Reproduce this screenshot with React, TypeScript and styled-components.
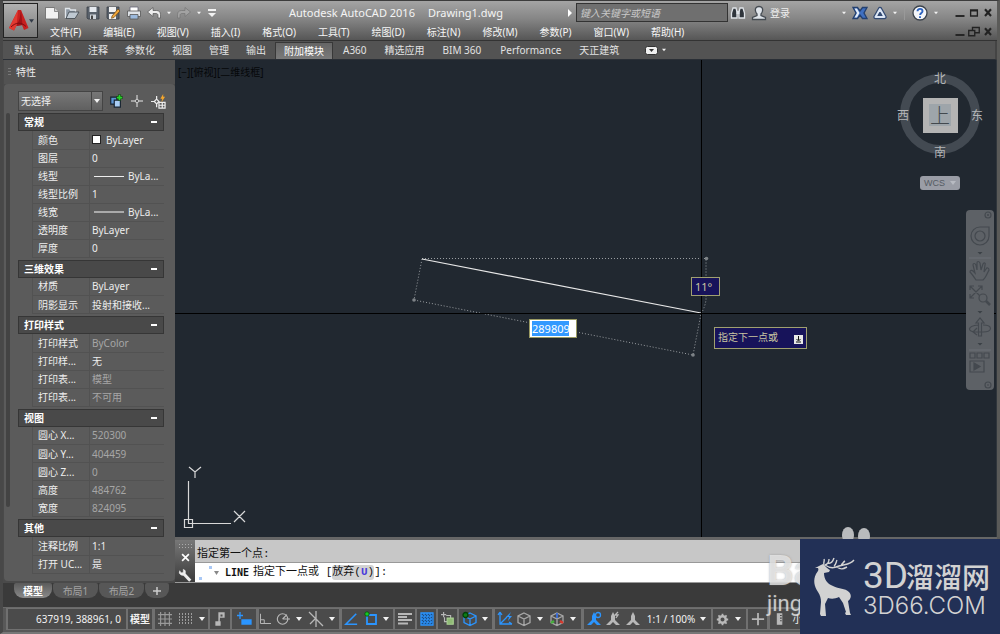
import React from "react";
import styled, { createGlobalStyle, css } from "styled-components";

const Global = createGlobalStyle`
  * { box-sizing: border-box; }
  html, body { margin: 0; padding: 0; }
  body {
    background: #3a3a3a;
    font: 10px/14px "Noto Sans", "Noto Sans CJK SC", sans-serif;
    color: #eee;
  }
  button, input, select { font: inherit; color: inherit; margin: 0; padding: 0; border: 0; background: none; }
  button { cursor: pointer; white-space: nowrap; }
  svg { display: block; flex: none; }
  a { color: inherit; text-decoration: none; }
  ul { list-style: none; margin: 0; padding: 0; }
`;

const Page = styled.div`
  position: relative;
  overflow: hidden;
`;

const Frame = styled.div`
  display: flex;
  flex-direction: column;
  min-height: 100vh;
  overflow: hidden;
  border-top: 1px solid #3c3c3c;
  border-left: 3px solid #484848;
  border-right: 3px solid #5a5a58;
  border-bottom: 2px solid #777;
`;

/* ---------- title bar ---------- */

const Header = styled.header`
  display: flex;
  height: 40px;
  padding-top: 2px;
  background: linear-gradient(#a4a4a4, #868686 45%, #565656);
  border-bottom: 1px solid #333;
`;

const AppButton = styled.button`
  display: flex;
  align-items: center;
  justify-content: center;
  width: 35px;
  height: 35px;
  flex: none;
  background: linear-gradient(#b0b0b0, #7a7a7a);
  border: 1px solid #222;
`;

const HeaderRows = styled.div`
  flex: 1;
  min-width: 0;
`;

const TitleRow = styled.div`
  display: flex;
  align-items: center;
  height: 19px;
`;

const MenuRow = styled.div`
  display: flex;
  justify-content: space-between;
  align-items: center;
  height: 20px;
`;

const QuickAccess = styled.div`
  display: flex;
  align-items: center;
  padding-left: 4px;
`;

const IconButton = styled.button<{ $w?: number }>`
  display: flex;
  align-items: center;
  justify-content: center;
  width: ${(p) => p.$w ?? 20}px;
  height: 18px;
  flex: none;
`;

const Title = styled.h1`
  flex: 1;
  display: flex;
  justify-content: center;
  gap: 13px;
  margin: 0;
  padding-left: 8px;
  font-size: 11px;
  line-height: 16px;
  font-weight: 400;
  color: #f4f4f4;
  white-space: nowrap;
`;

const Search = styled.input`
  width: 152px;
  height: 19px;
  padding: 0 3px;
  background: #6f6f6f;
  border: 1px solid #333;
  font-style: italic;
  &::placeholder { color: #c9c9c9; opacity: 1; }
`;

const SignIn = styled.button`
  display: flex;
  align-items: center;
  gap: 3px;
  width: 90px;
  padding-left: 3px;
`;

const Separator = styled.span`
  width: 1px;
  height: 14px;
  margin: 0 4px;
  background: #999;
`;

const WindowButtons = styled.div`
  display: flex;
  padding-right: 2px;
`;

const TitleWindowButtons = styled(WindowButtons)`
  padding-left: 12px;
`;

const MenuList = styled.ul`
  display: flex;
  gap: 22px;
  padding-left: 12px;
`;

const MenuItem = styled.button`
  height: 18px;
  color: #f6f6f6;
`;

/* ---------- ribbon ---------- */

const Ribbon = styled.nav`
  display: flex;
  align-items: center;
  height: 19px;
  padding-left: 3px;
  background: #535353;
  border-right: 2px solid #444;
  border-bottom: 1px solid #2a2f36;
`;

const RibbonTab = styled.button<{ $active?: boolean; $wide?: boolean }>`
  height: 17px;
  padding: 0 ${(p) => (p.$wide ? 9 : 8)}px;
  margin-right: 1px;
  color: #e2e2e2;
  ${(p) =>
    p.$active &&
    css`
      color: #fff;
      background: linear-gradient(#656565, #7a7a7a);
      border: 1px solid #383838;
      border-bottom: 0;
    `}
`;

const RibbonToggle = styled.button`
  display: flex;
  align-items: center;
  gap: 4px;
  margin-left: 17px;
`;

/* ---------- workspace ---------- */

const Workspace = styled.div`
  display: flex;
  flex: 1;
  background: #3a3a3a;
`;

const Palette = styled.aside`
  display: flex;
  flex-direction: column;
  width: 172px;
  flex: none;
  padding: 0 0 2px 1px;
  background: #4a4a4a;
`;

const PaletteTitle = styled.h2`
  display: flex;
  align-items: center;
  gap: 5px;
  margin: 0;
  height: 24px;
  padding-left: 4px;
  font-size: 10px;
  font-weight: 400;
  background: #525252;
`;

const Grip = styled.span`
  width: 3px;
  height: 9px;
  background: repeating-linear-gradient(#777 0 1px, transparent 1px 3px);
`;

const PaletteBody = styled.div`
  flex: 1;
  padding: 7px 11px 4px 3px;
  background: #5b5b5b;
  border-radius: 4px;
`;

const SelectionRow = styled.div`
  display: flex;
  align-items: center;
  height: 20px;
  padding-left: 11px;
  margin-bottom: 2px;
`;

const SelectBox = styled.div`
  position: relative;
  display: flex;
  flex: none;
  width: 85px;
  height: 20px;
  margin-right: 3px;
  background: linear-gradient(#777, #606060);
  border: 1px solid #444;
  select {
    width: 100%;
    padding-left: 2px;
    appearance: none;
  }
`;

const SelectArrow = styled.span`
  position: absolute;
  right: 0;
  top: 0;
  bottom: 0;
  display: flex;
  align-items: center;
  width: 11px;
  padding-left: 2px;
  border-left: 1px solid #444;
  pointer-events: none;
`;

const PropertyArea = styled.div`
  display: flex;
  gap: 8px;
`;

const ScrollThumb = styled.div`
  width: 4px;
  height: 394px;
  margin-left: -1px;
  background: #434343;
  border-radius: 2px;
`;

const Sections = styled.div`
  flex: 1;
  min-width: 0;
`;

const SectionHeader = styled.button`
  display: flex;
  align-items: center;
  justify-content: space-between;
  width: 100%;
  height: 18px;
  padding: 0 6px 0 5px;
  font-weight: 700;
  color: #fff;
  background: #494949;
  border: 1px solid #363636;
`;

const PropertyTable = styled.table`
  width: calc(100% - 14px);
  margin: 0 0 2px 14px;
  table-layout: fixed;
  border-collapse: collapse;
  tr { height: 18px; }
  th, td {
    height: 18px;
    padding: 0 0 0 5px;
    font-weight: 400;
    text-align: left;
    border-left: 1px solid #525252;
    border-bottom: 1px solid #525252;
    line-height: 14px;
    overflow: hidden;
    white-space: nowrap;
  }
  th { width: 57px; }
  td { padding-left: 2px; }
`;

const Value = styled.span<{ $muted?: boolean }>`
  display: flex;
  align-items: center;
  color: ${(p) => (p.$muted ? "#a6a6a6" : "#ededed")};
`;

const Swatch = styled.i`
  width: 9px;
  height: 9px;
  margin-right: 5px;
  background: #fff;
  border: 1px solid #222;
`;

const LineSample = styled.i<{ $bold?: boolean }>`
  width: 30px;
  margin: 0 4px 0 2px;
  border-top: ${(p) => (p.$bold ? "2px solid #aaa" : "1px solid #eee")};
`;

/* ---------- drawing area ---------- */

const DrawingColumn = styled.main`
  display: flex;
  flex-direction: column;
  flex: 1;
  min-width: 0;
`;

const Canvas = styled.section`
  position: relative;
  flex: 1;
  min-height: 476px;
  background: #212830;
  border-right: 1px solid #30363c;
  overflow: hidden;
`;

const Drawing = styled.svg`
  position: absolute;
  inset: 0;
  width: 100%;
  height: 100%;
`;

const ViewLabel = styled.button`
  position: absolute;
  left: 3px;
  top: 5px;
  color: #050709;
`;

const Floating = styled.div<{ $x: number; $y: number }>`
  position: absolute;
  left: ${(p) => p.$x}px;
  top: ${(p) => p.$y}px;
`;

const LengthInput = styled.input`
  display: block;
  width: 48px;
  height: 19px;
  padding: 0 2px;
  font-size: 11px;
  color: #fff;
  background: linear-gradient(#3399ff, #3399ff) 2px 1px / 37px 15px no-repeat #fff;
  border: 1px solid #9a9a62;
`;

const AngleInput = styled.input`
  display: block;
  width: 29px;
  height: 19px;
  padding: 0 3px;
  font-size: 11px;
  color: #c9c6a2;
  background: #17135a;
  border: 1px solid #a0a070;
`;

const Prompt = styled.div`
  display: flex;
  align-items: center;
  justify-content: space-between;
  width: 93px;
  height: 22px;
  padding: 0 3px 2px 3px;
  color: #c9c6a2;
  background: #17135a;
  border: 1px solid #a0a070;
`;

const PromptKey = styled.button`
  display: grid;
  place-items: center;
  width: 9px;
  height: 9px;
  margin-top: 5px;
  background: #e8e8e8;
`;

const ViewCube = styled.div`
  position: absolute;
  right: 11px;
  top: 8px;
  width: 90px;
  display: flex;
  flex-direction: column;
  align-items: center;
`;

const WcsButton = styled.button`
  display: flex;
  align-items: center;
  justify-content: space-between;
  width: 40px;
  height: 14px;
  margin-top: 14px;
  padding: 0 4px;
  font: 9px/12px "Liberation Sans", sans-serif;
  color: #555b63;
  background: #9a9da6;
  border-radius: 3px;
`;

const CompassGrid = styled.div`
  position: relative;
  display: grid;
  grid-template-columns: 16px 58px 16px;
  grid-template-rows: 20px 54px 20px;
  place-items: center;
  font: 12px/16px "Noto Sans CJK SC", sans-serif;
  color: #b4b6b8;
`;

const Ring = styled.div`
  position: absolute;
  left: 5px;
  top: 6px;
  width: 80px;
  height: 80px;
  border: 9px solid #434a52;
  border-radius: 50%;
`;

const Compass = styled.span<{ $col: number; $row: number }>`
  position: relative;
  grid-column: ${(p) => p.$col};
  grid-row: ${(p) => p.$row};
`;

const CubeFace = styled.button`
  position: relative;
  grid-column: 2;
  grid-row: 2;
  width: 35px;
  height: 35px;
  font: 300 20px/22px "Noto Sans CJK SC", sans-serif;
  color: #43494e;
  background: linear-gradient(#9ea5aa, #9ea5aa) center / 22px 22px no-repeat #b4b4b4;
`;

const NavBar = styled.div`
  position: absolute;
  right: 2px;
  top: 150px;
  display: flex;
  flex-direction: column;
  align-items: center;
  width: 28px;
  height: 180px;
  background: #5d6166;
  border-radius: 4px;
`;

/* ---------- command line ---------- */

const CommandLine = styled.section`
  display: flex;
  height: 46px;
  border-top: 3px solid #666;
  border-bottom: 1px solid #999;
  font: 11px/15px "Liberation Mono", "Noto Sans CJK SC", monospace;
`;

const CommandTools = styled.div`
  display: flex;
  flex-direction: column;
  align-items: center;
  width: 20px;
  background: linear-gradient(#777, #3c3c3c);
`;

const Dots = styled.span`
  width: 15px;
  height: 5px;
  margin-top: 3px;
  flex: none;
  background: radial-gradient(circle, #aaa 1px, transparent 1px) 0 0 / 3px 3px;
`;

const CommandText = styled.div`
  flex: 1;
  min-width: 0;
  color: #111;
`;

const History = styled.div`
  height: 22px;
  padding: 7px 2px 0;
  background: #c7c7c7;
`;

const CommandRow = styled.label`
  display: flex;
  align-items: center;
  height: 20px;
  padding-left: 4px;
  background: #fff;
  border-top: 1px solid #999;
  white-space: pre;
  b { margin: 0 4px; font: 700 10px/15px "DejaVu Sans Mono", monospace; }
  input { flex: 1; min-width: 0; }
`;

const OptionButton = styled.button`
  height: 15px;
  line-height: 15px;
  background: #d2d2d2;
  border-radius: 3px;
  em { font-style: normal; font-weight: 700; color: #4a3ddb; }
`;

/* ---------- bottom bars ---------- */

const LayoutTabs = styled.nav`
  display: flex;
  align-items: flex-start;
  height: 24px;
  padding-left: 11px;
  background: #3a3a3a;
`;

const LayoutTab = styled.button<{ $active?: boolean; $w?: number }>`
  width: ${(p) => p.$w ?? 45}px;
  height: 15px;
  margin-right: 1px;
  line-height: 14px;
  color: ${(p) => (p.$active ? "#fff" : "#a2a2a2")};
  font-weight: ${(p) => (p.$active ? 700 : 400)};
  background: ${(p) => (p.$active ? "linear-gradient(#5b5b5b, #8a8a8a)" : "#575757")};
  border-radius: 2px 2px 9px 9px;
`;

const StatusBar = styled.footer`
  display: flex;
  height: 25px;
  padding: 0 0 2px 3px;
  background: #585858;
  border-top: 1px solid #6a6a6a;
`;

const StatusGroup = styled.div<{ $w: number }>`
  display: flex;
  align-items: center;
  width: ${(p) => p.$w}px;
  flex: none;
  overflow: hidden;
  background: #4b4b4b;
  border: 1px solid #707070;
  border-left-width: ${(p) => (p.$w > 50 ? 2 : 1)}px;
`;

const StatusButton = styled.button<{ $w?: number; $bold?: boolean }>`
  display: flex;
  align-items: center;
  justify-content: center;
  width: ${(p) => (p.$w ? `${p.$w}px` : "auto")};
  flex: ${(p) => (p.$w ? "none" : "1")};
  height: 20px;
  font-weight: ${(p) => (p.$bold ? 700 : 400)};
  color: #f2f2f2;
`;

const Coordinates = styled(StatusButton)`
  justify-content: flex-end;
  padding-right: 5px;
`;

/* ---------- overlays ---------- */

const Brand = styled.div`
  position: absolute;
  right: 0;
  bottom: 0;
  display: flex;
  width: 200px;
  height: 95px;
  padding: 18px 0 0 12px;
  background: #223056;
  color: #d2d2d2;
`;

const BrandText = styled.div`
  margin-left: 6px;
  white-space: nowrap;
`;

const BrandName = styled.div`
  display: flex;
  align-items: center;
  height: 36px;
  margin-top: 1px;
  font: 500 28px/36px "Noto Sans CJK SC", sans-serif;
  span { font: 400 37px/36px Roboto, sans-serif; margin-right: -2px; }
`;

const BrandSite = styled.div`
  font: 300 24px/24px Inter, sans-serif;
`;

const Watermark = styled.div`
  position: absolute;
  right: 0;
  bottom: 17px;
  width: 233px;
  color: rgba(240, 240, 240, 0.75);
  text-shadow: 0 0 2px rgba(120, 120, 120, 0.6);
  pointer-events: none;
  strong { display: block; font: 700 42px/40px Roboto, sans-serif; }
  span { display: block; font: 400 22px/26px Roboto, sans-serif; }
`;

const Paws = styled.svg`
  position: absolute;
  right: 129px;
  bottom: 95px;
`;

/* ---------- icons ---------- */

type IconProps = { children: React.ReactNode; size?: number; color?: string };
const Icon = ({ children, size = 16, color = "#b8b8b8" }: IconProps) => (
  <svg width={size} height={size} viewBox="0 0 16 16" fill="none" stroke={color} strokeWidth="1.3">
    {children}
  </svg>
);

const Caret = ({ color = "#f2f2f2", w = 6 }: { color?: string; w?: number }) => (
  <svg width={w} height="4" viewBox="0 0 6 4">
    <path d="M0 0h6L3 4z" fill={color} />
  </svg>
);

const blue = "#2b95ff";

const NewIcon = () => (
  <Icon>
    <path d="M1.500 2.500h9l4 4V14h-13z" fill="#f1f1f1" stroke="#666" strokeWidth=".8" />
    <path d="M10.500 2.500v4h4" stroke="#777" fill="#ccc" strokeWidth=".8" />
  </Icon>
);
const OpenIcon = () => (
  <Icon>
    <path d="M1.500 13V3.500h4l1 1.500h5v2" fill="#8e99a5" stroke="#e0e5ea" />
    <path d="M2 13.500 5 7h10l-4 6.500z" fill="#bfc9d2" stroke="#3b4249" strokeWidth=".8" />
  </Icon>
);
const SaveIcon = () => (
  <Icon>
    <path d="M2 2h12v12H3l-1-1z" fill="#59616b" stroke="#3b4047" strokeWidth=".8" />
    <path d="M4.500 2h7v5h-7z" fill="#e5e9ee" stroke="none" />
    <path d="M5 9.500h6V14H5z" fill="#cfd4da" stroke="none" />
    <path d="M6 10.500h2V14H6z" fill="#444" stroke="none" />
  </Icon>
);
const SaveAsIcon = () => (
  <Icon>
    <path d="M2 2h12v12H3l-1-1z" fill="#59616b" stroke="#3b4047" strokeWidth=".8" />
    <path d="M4 2h7v5H4zM4 9h7v5H4z" fill="#f1f1f1" stroke="none" />
    <path d="m7 11 6-7 2 2-6 6.500-2.500.800z" fill="#f0a63a" stroke="#6b4615" strokeWidth=".7" />
  </Icon>
);
const PrintIcon = () => (
  <Icon>
    <path d="M4 6V2h8v4" fill="#fff" stroke="#667" strokeWidth=".8" />
    <path d="M1.500 6h13v5.500h-13z" fill="#dfe3e8" stroke="#555" strokeWidth=".8" />
    <path d="M4 9.500h8V14H4z" fill="#9bb9dd" stroke="#555" strokeWidth=".8" />
  </Icon>
);
const UndoIcon = ({ muted }: { muted?: boolean }) => (
  <Icon color={muted ? "#747474" : "#555"}>
    <path
      transform={muted ? "matrix(-1 0 0 1 16 0)" : undefined}
      d="M1.500 7 7 2.500v3h3.500c2.500 0 4 1.500 4 4V13h-2.500v-2.500c0-1.300-.7-2-2-2H7v3z"
      fill={muted ? "#a2a2a2" : "#ededed"}
      strokeWidth=".7"
    />
  </Icon>
);

const LogoA = () => (
  <svg width="21" height="23" viewBox="0 0 21 23">
    <path d="M10 1 1 19l5 2.500 2-4.500 6-1 2 5 4.500-2L13 1z" fill="#c8201f" />
    <path d="M10 1 8.500 17 6 21.500 1 19z" fill="#e23a31" />
    <path d="m13 1 1.500 15-6 1 3-7z" fill="#a01216" />
    <path d="M3 18c5-5 10-5 15-.500" fill="none" stroke="#7c0c10" strokeWidth="1" />
  </svg>
);

const Deer = () => (
  <svg width="45" height="60" viewBox="0 0 45 60" fill="#d2d2d2">
    <path d="M3 11c3-1 5-3 8-4 2 1 3 4 7 6l-1 2-5 1c0 6 3 11 9 13 6 3 12 2 16 6 3 3 2 7-1 9l2 12 1 2h-5l-1-2 1-1-3-9-4-6c-4 2-8 2-11 1l-3 6 1 12h-5l-1-2 1-12c0-4-1-7-3-10-4-6-5-12-2-18 2-3 3-4 2-6z" />
    <path
      d="M12 8C11 5 13 4 12 2M13 8c3-1 4-3 4-6M16 6c3 1 5-2 6-5M13 8c6 4 9 3 14 1 6-2 11-1 15-6M22 9c2-1 2-4 3-6M29 8c2-1 2-3 4-4M25 10c4 3 6 2 10 0"
      fill="none"
      stroke="#d2d2d2"
      strokeWidth="1.400"
    />
  </svg>
);

/* ---------- data ---------- */

const menus = ["文件(F)", "编辑(E)", "视图(V)", "插入(I)", "格式(O)", "工具(T)", "绘图(D)", "标注(N)", "修改(M)", "参数(P)", "窗口(W)", "帮助(H)"];
const ribbonTabs = ["默认", "插入", "注释", "参数化", "视图", "管理", "输出", "附加模块", "A360", "精选应用", "BIM 360", "Performance", "天正建筑"];

type Row = { label: string; value: string; muted?: boolean; kind?: "swatch" | "line" | "bold" };
const sections: { title: string; rows: Row[] }[] = [
  {
    title: "常规",
    rows: [
      { label: "颜色", value: "ByLayer", kind: "swatch" },
      { label: "图层", value: "0" },
      { label: "线型", value: "ByLa...", kind: "line" },
      { label: "线型比例", value: "1" },
      { label: "线宽", value: "ByLa...", kind: "bold" },
      { label: "透明度", value: "ByLayer" },
      { label: "厚度", value: "0" },
    ],
  },
  {
    title: "三维效果",
    rows: [
      { label: "材质", value: "ByLayer" },
      { label: "阴影显示", value: "投射和接收..." },
    ],
  },
  {
    title: "打印样式",
    rows: [
      { label: "打印样式", value: "ByColor", muted: true },
      { label: "打印样...", value: "无" },
      { label: "打印表...", value: "模型", muted: true },
      { label: "打印表...", value: "不可用", muted: true },
    ],
  },
  {
    title: "视图",
    rows: [
      { label: "圆心 X...", value: "520300", muted: true },
      { label: "圆心 Y...", value: "404459", muted: true },
      { label: "圆心 Z...", value: "0", muted: true },
      { label: "高度", value: "484762", muted: true },
      { label: "宽度", value: "824095", muted: true },
    ],
  },
  {
    title: "其他",
    rows: [
      { label: "注释比例", value: "1:1" },
      { label: "打开 UC...", value: "是" },
    ],
  },
];

/* ---------- page parts ---------- */

const TitleBar = () => (
  <Header>
    <AppButton aria-label="应用程序菜单">
      <LogoA />
      <Caret color="#333b48" w={5} />
    </AppButton>
    <HeaderRows>
      <TitleRow>
        <QuickAccess>
          <IconButton aria-label="新建"><NewIcon /></IconButton>
          <IconButton aria-label="打开"><OpenIcon /></IconButton>
          <IconButton $w={21} aria-label="保存"><SaveIcon /></IconButton>
          <IconButton aria-label="另存为"><SaveAsIcon /></IconButton>
          <IconButton $w={21} aria-label="打印"><PrintIcon /></IconButton>
          <IconButton aria-label="放弃"><UndoIcon /></IconButton>
          <IconButton $w={10} aria-label="放弃列表"><Caret w={4} /></IconButton>
          <IconButton aria-label="重做"><UndoIcon muted /></IconButton>
          <IconButton $w={10} aria-label="重做列表"><Caret w={4} /></IconButton>
          <IconButton $w={16} aria-label="自定义">
            <svg width="8" height="8" viewBox="0 0 8 8"><path d="M0 0h8v2H0zM0 4h8L4 8z" fill="#f2f2f2" /></svg>
          </IconButton>
        </QuickAccess>
        <Title><span>Autodesk AutoCAD 2016</span><span>Drawing1.dwg</span></Title>
        <IconButton $w={12} aria-label="展开搜索">
          <svg width="4" height="8" viewBox="0 0 4 8"><path d="M0 0v8l4-4z" fill="#fff" /></svg>
        </IconButton>
        <Search aria-label="搜索" placeholder="键入关键字或短语" />
        <IconButton aria-label="查找">
          <Icon>
            <path d="M3 3h3l1 4v6H1.500V8zM13 3h-3L9 7v6h5.500V8z" fill="#2f353c" stroke="#dfe3e8" />
            <path d="M6.500 6h3v3h-3z" fill="#dfe3e8" stroke="none" />
          </Icon>
        </IconButton>
        <SignIn>
          <Icon>
            <path d="M8 1.500c3 0 4 2 3.500 4.500-.3 1.700-1 2.500-1.500 3v1.500l4.500 2v2h-13v-2l4.500-2V9c-.5-.5-1.200-1.300-1.500-3C4 3.500 5 1.500 8 1.500z" fill="#dfe4ea" stroke="#454b52" />
          </Icon>
          登录
        </SignIn>
        <IconButton $w={12} aria-label="登录菜单"><Caret w={4} /></IconButton>
        <IconButton aria-label="Exchange">
          <Icon>
            <path d="M1 2.500h4.500L8 6l2.500-3.500H15L12 8l3 5.500h-4.500L8 10l-2.500 3.500H1L4 8z" fill="#3f6fc0" stroke="#24406f" />
            <path d="M2.500 3.500H5L7.500 8 5 12.500H2.500L5 8z" fill="#e3ecf8" stroke="none" />
          </Icon>
        </IconButton>
        <IconButton aria-label="Autodesk 360">
          <Icon>
            <path d="M8 4 12.500 12h-9z" stroke="#334a72" strokeWidth="4.500" strokeLinejoin="round" />
            <path d="M8 4 12.500 12h-9z" stroke="#dce6f5" strokeWidth="2" strokeLinejoin="round" />
            <circle cx="8" cy="9.500" r="1.500" fill="#334a72" stroke="none" />
          </Icon>
        </IconButton>
        <IconButton $w={10} aria-label="应用菜单"><Caret w={4} /></IconButton>
        <Separator />
        <IconButton $w={22} aria-label="帮助">
          <Icon>
            <circle cx="8" cy="8" r="7" fill="#f4f6fa" stroke="#3c434c" />
            <path d="M5.500 6.200c0-3.200 5-3 5 0 0 1.800-2.400 1.800-2.400 3.800M8 11.300v1.700" stroke="#2d63c0" strokeWidth="1.900" />
          </Icon>
        </IconButton>
        <IconButton $w={10} aria-label="帮助菜单"><Caret w={4} /></IconButton>
        <TitleWindowButtons>
          <IconButton $w={14} aria-label="最小化"><Icon size={12} color="#222"><path d="M2 12h12" strokeWidth="2.500" /></Icon></IconButton>
          <IconButton $w={14} aria-label="最大化"><Icon size={12} color="#222"><path d="M3.500 4h9v8h-9zM3 5h10" strokeWidth="1.800" /></Icon></IconButton>
          <IconButton $w={14} aria-label="关闭"><Icon size={12} color="#222"><path d="m4 3 8 9M12 3l-8 9" strokeWidth="2.800" /></Icon></IconButton>
        </TitleWindowButtons>
      </TitleRow>
      <MenuRow>
        <MenuList>
          {menus.map((m) => <li key={m}><MenuItem>{m}</MenuItem></li>)}
        </MenuList>
        <WindowButtons>
          <IconButton $w={14} aria-label="最小化图形"><Icon size={12} color="#222"><path d="M2 12h12" strokeWidth="2.500" /></Icon></IconButton>
          <IconButton $w={14} aria-label="还原图形"><Icon size={12} color="#222"><path d="M1 6h8v7H1zM6 6V2h9v7H9" strokeWidth="1.800" /></Icon></IconButton>
          <IconButton $w={14} aria-label="关闭图形"><Icon size={12} color="#222"><path d="m4 3 8 9M12 3l-8 9" strokeWidth="2.800" /></Icon></IconButton>
        </WindowButtons>
      </MenuRow>
    </HeaderRows>
  </Header>
);

const PropertiesPalette = () => (
  <Palette>
    <PaletteTitle><Grip />特性</PaletteTitle>
    <PaletteBody>
      <SelectionRow>
        <SelectBox>
          <select aria-label="选择对象"><option>无选择</option></select>
          <SelectArrow><Caret /></SelectArrow>
        </SelectBox>
        <IconButton aria-label="切换 PICKADD">
          <Icon size={14}>
            <path d="M2 3.500h7v8H2z" fill="#5b93cf" stroke="#16222f" />
            <path d="M6 7h7v8H6z" fill="#a9cdf4" stroke="#16222f" />
            <path d="M12 .500v7M8.500 4h7" stroke="#123d12" strokeWidth="3.500" />
            <path d="M12 1v6M9 4h6" stroke="#29d32a" strokeWidth="2" />
          </Icon>
        </IconButton>
        <IconButton $w={22} aria-label="选择对象">
          <Icon size={12} color="#eee"><path d="M8 0v5M8 11v5M0 8h5M11 8h5M8 5l3 3-3 3-3-3z" /></Icon>
        </IconButton>
        <IconButton aria-label="快速选择">
          <Icon size={15} color="#eee">
            <path d="M6 2v4M6 10v4M0 8h4M6 5.500 8.500 8 6 10.500 3.500 8z" />
            <path d="M8.500 9h6.500v6H8.500zM12 9v6M8.500 12H15" />
            <path d="m13 0-3 5h2l-1 4 4-6h-2z" fill="#f5a72c" stroke="none" />
          </Icon>
        </IconButton>
      </SelectionRow>
      <PropertyArea>
        <ScrollThumb />
        <Sections>
          {sections.map((s) => (
            <React.Fragment key={s.title}>
              <SectionHeader>
                {s.title}
                <svg width="6" height="2"><path d="M0 1h6" stroke="#fff" strokeWidth="2" /></svg>
              </SectionHeader>
              <PropertyTable>
                <tbody>
                  {s.rows.map((r, i) => (
                    <tr key={i}>
                      <th scope="row">{r.label}</th>
                      <td>
                        <Value $muted={r.muted}>
                          {r.kind === "swatch" && <Swatch />}
                          {r.kind === "line" && <LineSample />}
                          {r.kind === "bold" && <LineSample $bold />}
                          {r.value}
                        </Value>
                      </td>
                    </tr>
                  ))}
                </tbody>
              </PropertyTable>
            </React.Fragment>
          ))}
        </Sections>
      </PropertyArea>
    </PaletteBody>
  </Palette>
);

const NavigationBar = () => (
  <NavBar>
    <svg width="28" height="180" viewBox="0 0 28 180" fill="none" stroke="#44494f" strokeWidth="1.200">
      <circle cx="22" cy="5" r="3" />
      <path d="m21 4 2 2m0-2-2 2" strokeWidth=".8" />
      <path d="M14 17h9v9a9 9 0 1 1-9-9z" />
      <circle cx="14" cy="26" r="5" />
      <path d="M11.500 42h5L14 44.500z" fill="#3b4046" stroke="none" />
      <path d="M3 48h22M3 140h22" stroke="#6d7176" strokeWidth="1" />
      <path d="M10 70c-2-3-4-6-6-8 0-2 2-2 3-1l2 2-2-8c0-2 2-2 3 0l1 5v-7c0-2 2-2 3 0l1 7 2-6c1-2 3-1 2 1l-1 7 2-3c1-2 3-1 3 1l-3 6c-1 2-2 3-3 4z" />
      <path d="M4 76 16 88M16 76 4 88M4 80v-4h4M12 76h4v4M4 84v4h4" />
      <circle cx="17" cy="88" r="4" fill="#5d6166" />
      <path d="m20 91 4 4" strokeWidth="2.500" />
      <path d="M11.500 101h5l-2.500 2.500z" fill="#3b4046" stroke="none" />
      <path d="M12.500 126v-13H10l4-5 4 5h-2.500v13zM12 115c-11 1-11 7-2 7h7c10 0 10-7 0-7M11 118l-4 4 4 3" />
      <path d="M11.500 133h5l-2.500 2.500z" fill="#3b4046" stroke="none" />
      <path d="M4 143h5v5H4zM11 143h5v5h-5zM18 143h5v5h-5zM4 151h14v11H4z" />
      <path d="m8 153 6 3.500-6 3.500z" fill="#44494f" />
      <circle cx="22" cy="175" r="3" />
      <path d="M21 175h2" />
    </svg>
  </NavBar>
);

const DrawingArea = () => (
  <Canvas>
    <Drawing>
      <g stroke="#9a9ea2" strokeDasharray="1 2" fill="none">
        <path d="M247 198.500H531V240Q530 247 526 254" />
        <path d="M247 199 239 240 518 295 526 254" />
      </g>
      <path d="M247 199 526 253" stroke="#e8e8e8" strokeWidth="1.200" />
      <g fill="#7d8286">
        <circle cx="531.500" cy="198.500" r="1.800" />
        <circle cx="239" cy="240" r="1.800" />
        <circle cx="518" cy="295" r="1.800" />
      </g>
      <path d="M526.500 0V2000M0 253.500H4000" stroke="#000" />
      <g stroke="#d8d8d8" fill="none" strokeWidth="1.200">
        <path d="M13.500 421V463.500H56M9.500 459.500h8v8h-8zM14 407l6 5 6-5M20 412v6M59 451l11 11M70 451 59 462" />
      </g>
    </Drawing>
    <ViewLabel>[−][俯视][二维线框]</ViewLabel>
    <Floating $x={516} $y={217}><AngleInput aria-label="角度" defaultValue="11°" /></Floating>
    <Floating $x={354} $y={259}><LengthInput aria-label="长度" defaultValue="289809" /></Floating>
    <Floating $x={539} $y={267}>
      <Prompt>
        指定下一点或
        <PromptKey aria-label="选项">
          <svg width="7" height="7" viewBox="0 0 7 7"><path d="M1 6h5M3.500 0v4M1.500 3l2 2 2-2" stroke="#111" fill="none" /></svg>
        </PromptKey>
      </Prompt>
    </Floating>
    <ViewCube>
      <CompassGrid>
        <Ring />
        <Compass $col={2} $row={1}>北</Compass>
        <Compass $col={1} $row={2}>西</Compass>
        <CubeFace>上</CubeFace>
        <Compass $col={3} $row={2}>东</Compass>
        <Compass $col={2} $row={3}>南</Compass>
      </CompassGrid>
      <WcsButton>WCS <Caret color="#b8bbc2" /></WcsButton>
    </ViewCube>
    <NavigationBar />
  </Canvas>
);

const Command = () => (
  <CommandLine>
    <CommandTools>
      <Dots />
      <IconButton $w={20} aria-label="关闭命令行">
        <Icon size={9} color="#fff"><path d="m2 2 12 12M14 2 2 14" strokeWidth="3" /></Icon>
      </IconButton>
      <IconButton $w={20} aria-label="自定义命令行">
        <Icon size={14} color="#eee">
          <path d="m6 6 8 8.500" strokeWidth="3.500" />
          <path d="M2 3a3.500 3.500 0 1 0 4-1.500V5L3.500 5.500z" fill="#eee" strokeWidth=".5" />
        </Icon>
      </IconButton>
    </CommandTools>
    <CommandText>
      <History>指定第一个点:</History>
      <CommandRow>
        <svg width="22" height="16" viewBox="0 0 22 16">
          <path d="M10 1h3v3h-3zM0 12h3v3H0z" fill="#a9c8f5" />
          <path d="M15 6h5l-2.500 4z" fill="#888" />
        </svg>
        <b>LINE</b>指定下一点或 [
        <OptionButton>放弃(<em>U</em>)</OptionButton>]:
        <input aria-label="命令" />
      </CommandRow>
    </CommandText>
  </CommandLine>
);

const Person = ({ color = "#b8b8b8", extra }: { color?: string; extra?: React.ReactNode }) => (
  <Icon color={color}>
    <path d="M8 1 6 5v4l-5 5h4l3-3 3 3h4l-5-5V5z" fill={color} stroke="none" />
    {extra}
  </Icon>
);

const Cube = ({ color = "#a8a8a8", children }: { color?: string; children?: React.ReactNode }) => (
  <Icon color={color}>
    <path d="M8 2 14 5v6.500L8 14.500 2 11.500V5zM2 5l6 3 6-3M8 8v6.500" />
    {children}
  </Icon>
);

const Status = () => (
  <StatusBar>
    <StatusGroup $w={121}><Coordinates>637919, 388961, 0</Coordinates></StatusGroup>
    <StatusGroup $w={26}><StatusButton $bold>模型</StatusButton></StatusGroup>
    <StatusGroup $w={56}>
      <StatusButton $w={20} aria-label="栅格"><Icon size={14} color="#9a9a9a"><path d="M3 0v16M8 0v16M13 0v16M0 3h16M0 8h16M0 13h16" /></Icon></StatusButton>
      <StatusButton $w={20} aria-label="捕捉"><Icon><path d="M2 3h13M2 6h13M2 9h13M2 12h13" strokeDasharray="1 2" /></Icon></StatusButton>
      <StatusButton $w={14} aria-label="捕捉菜单"><Caret /></StatusButton>
    </StatusGroup>
    <StatusGroup $w={22}><StatusButton aria-label="推断约束"><Icon><path d="M7 13V2h5v4H8M4 11h4v3H4z" fill="#b8b8b8" /><path d="M8.500 3.500h2v2h-2z" fill="#4b4b4b" stroke="none" /></Icon></StatusButton></StatusGroup>
    <StatusGroup $w={26}><StatusButton aria-label="动态输入"><Icon color={blue}><path d="M4 1v7M1 4.500h6" /><path d="M6 9h9v4H6z" fill={blue} /></Icon></StatusButton></StatusGroup>
    <StatusGroup $w={83}>
      <StatusButton $w={12} aria-label="正交"><Icon size={12}><path d="M2 1v13h14M2 9h5v5" /></Icon></StatusButton>
      <StatusButton $w={24} aria-label="极轴"><Icon size={14}><circle cx="7.500" cy="8" r="6" /><path d="M7.500 8H16M7.500 8l5-5" /></Icon></StatusButton>
      <StatusButton $w={8} aria-label="极轴菜单"><Caret /></StatusButton>
      <StatusButton $w={26} aria-label="等轴测草图"><Icon><path d="m1 1 14 14M8 0v16M2 13l5-5" /></Icon></StatusButton>
      <StatusButton $w={6} aria-label="等轴测菜单"><Caret /></StatusButton>
    </StatusGroup>
    <StatusGroup $w={54}>
      <StatusButton $w={17} aria-label="对象捕捉追踪"><Icon color={blue} size={14}><path d="M14 2 2 14h13" strokeWidth="1.800" /></Icon></StatusButton>
      <StatusButton $w={24} aria-label="对象捕捉"><Icon color={blue}><path d="M4 4h9v9H4z" strokeWidth="1.800" /><circle cx="4" cy="3" r="2.200" fill="#18c821" stroke="#064d0a" strokeWidth=".8" /></Icon></StatusButton>
      <StatusButton $w={6} aria-label="对象捕捉菜单"><Caret /></StatusButton>
    </StatusGroup>
    <StatusGroup $w={22}><StatusButton aria-label="线宽"><Icon><path d="M1 3h14M1 6h9M1 9h14M1 12.500h10" strokeWidth="1.800" /></Icon></StatusButton></StatusGroup>
    <StatusGroup $w={21}><StatusButton aria-label="透明度"><Icon color={blue}><path d="M2 2h12v12H2z" fill="#1d4f86" /><path d="M2 5h12M2 8h12M2 11h12M5 2v12M8 2v12M11 2v12" strokeDasharray="2 1" /></Icon></StatusButton></StatusGroup>
    <StatusGroup $w={21}><StatusButton aria-label="选择循环"><Icon size={14}><path d="M3 0v6M0 3h6M4 6v5h3M6 4h5v3" /><path d="M7 7h7v7H7z" fill="#8fba75" stroke="#a9cf92" /></Icon></StatusButton></StatusGroup>
    <StatusGroup $w={35}>
      <StatusButton $w={21} aria-label="三维对象捕捉"><Cube color={blue}><circle cx="3.500" cy="4" r="2.500" fill="#0c7e15" stroke="#043f08" /></Cube></StatusButton>
      <StatusButton $w={10} aria-label="三维捕捉菜单"><Caret /></StatusButton>
    </StatusGroup>
    <StatusGroup $w={89}>
      <StatusButton $w={19} aria-label="动态 UCS"><Icon color={blue}><path d="M3 2v11h12M3 13l7-7M3 1 1 4M3 1l2 3M15 13l-3-2" /><path d="m14 1-5 5h3l-1 4 4-5h-3z" fill={blue} stroke="none" /></Icon></StatusButton>
      <StatusButton $w={20} aria-label="选择过滤"><Cube /></StatusButton>
      <StatusButton $w={12} aria-label="过滤菜单"><Caret /></StatusButton>
      <StatusButton $w={21} aria-label="小控件"><Cube><path d="M8 2v5" stroke="#3b6fe0" strokeWidth="1.800" /><path d="m2 12 3-2" stroke="#46b03c" strokeWidth="2.500" /><path d="m11 10 3 2" stroke="#d8382c" strokeWidth="2.500" /></Cube></StatusButton>
      <StatusButton $w={12} aria-label="小控件菜单"><Caret /></StatusButton>
    </StatusGroup>
    <StatusGroup $w={130}>
      <StatusButton $w={19} aria-label="注释可见性"><Person color={blue} extra={<circle cx="12" cy="4" r="2.500" />} /></StatusButton>
      <StatusButton $w={20} aria-label="自动缩放"><Person extra={<path d="m13 1-3 3h3l-2 3" />} /></StatusButton>
      <StatusButton $w={20} aria-label="注释比例"><Person /></StatusButton>
      <StatusButton $w={56}>1:1 / 100%</StatusButton>
      <StatusButton $w={8} aria-label="比例菜单"><Caret /></StatusButton>
    </StatusGroup>
    <StatusGroup $w={35}>
      <StatusButton $w={19} aria-label="切换工作空间"><Icon size={13}><circle cx="8" cy="8" r="4" strokeWidth="3" /><path d="M8 1v3M8 12v3M1 8h3M12 8h3M3 3l2 2M11 11l2 2M13 3l-2 2M5 11l-2 2" strokeWidth="2.200" /></Icon></StatusButton>
      <StatusButton $w={12} aria-label="工作空间菜单"><Caret /></StatusButton>
    </StatusGroup>
    <StatusGroup $w={21}><StatusButton aria-label="注释监视器"><Icon size={14}><path d="M8 1v14M1 8h14" strokeWidth="2" /></Icon></StatusButton></StatusGroup>
    <StatusGroup $w={70}>
      <StatusButton $w={20} aria-label="单位"><Icon size={14}><path d="M5 2h5v12H5z" fill="#b8b8b8" /><path d="M10 4H8M10 7H8M10 10H8" stroke="#4b4b4b" /></Icon></StatusButton>
      <StatusButton $w={25}>小数</StatusButton>
    </StatusGroup>
  </StatusBar>
);

export default function App() {
  return (
    <Page>
      <Global />
      <Frame>
        <TitleBar />
        <Ribbon>
          {ribbonTabs.map((t) => (
            <RibbonTab key={t} $active={t === "附加模块"} $wide={/[A-Z]/.test(t)}>{t}</RibbonTab>
          ))}
          <RibbonToggle aria-label="功能区显示">
            <svg width="13" height="9" viewBox="0 0 13 9"><rect x=".5" y=".5" width="12" height="8" rx="2" fill="#f0f0f0" stroke="#333" /><path d="M4 3h5L6.500 6z" fill="#333" /></svg>
            <Caret w={4} />
          </RibbonToggle>
        </Ribbon>
        <Workspace>
          <PropertiesPalette />
          <DrawingColumn>
            <DrawingArea />
            <Command />
          </DrawingColumn>
        </Workspace>
        <LayoutTabs>
          <LayoutTab $active $w={38}>模型</LayoutTab>
          <LayoutTab>布局1</LayoutTab>
          <LayoutTab>布局2</LayoutTab>
          <LayoutTab $w={24} aria-label="新建布局">
            <svg width="24" height="8" viewBox="0 0 24 8"><path d="M12 0v8M8 4h8" stroke="#ccc" strokeWidth="1.500" /></svg>
          </LayoutTab>
        </LayoutTabs>
        <Status />
      </Frame>
      <Watermark aria-hidden="true"><strong>Ba</strong><span>jing</span></Watermark>
      <Paws width="30" height="12" viewBox="0 0 30 12">
        <ellipse cx="7" cy="8" rx="6" ry="8" fill="#b9bbbd" />
        <ellipse cx="23" cy="9" rx="6" ry="8" fill="#b9bbbd" />
      </Paws>
      <Brand>
        <Deer />
        <BrandText>
          <BrandName><span>3D</span>溜溜网</BrandName>
          <BrandSite>3D66.COM</BrandSite>
        </BrandText>
      </Brand>
    </Page>
  );
}
